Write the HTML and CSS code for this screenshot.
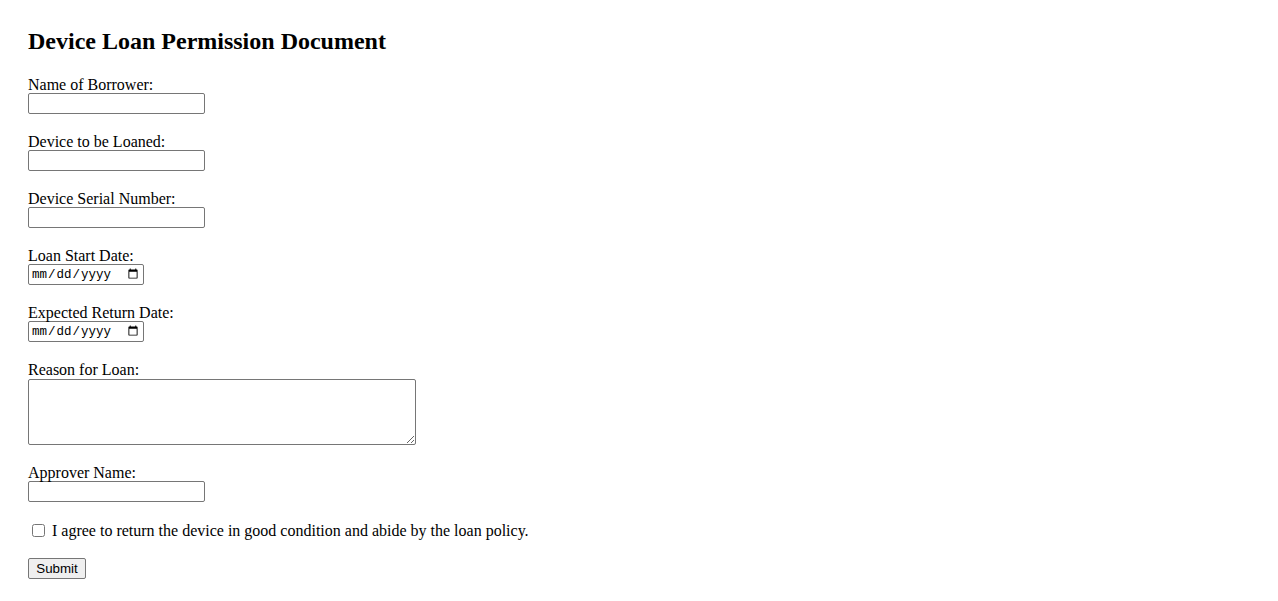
FILE: index.html
```html
<!DOCTYPE html>
<html lang="en">
<head>
<meta charset="utf-8">
<title>Device Loan Permission Document</title>
<link rel="stylesheet" href="styles.css">
</head>
<body>
<div class="page">
  <h2 class="title">Device Loan Permission Document</h2>
  <form class="loan-form">
    <div class="field">
      <label class="field-label" for="borrower">Name of Borrower:</label>
      <input class="text-input" type="text" id="borrower">
    </div>
    <div class="field">
      <label class="field-label" for="device">Device to be Loaned:</label>
      <input class="text-input" type="text" id="device">
    </div>
    <div class="field">
      <label class="field-label" for="serial">Device Serial Number:</label>
      <input class="text-input" type="text" id="serial">
    </div>
    <div class="field">
      <label class="field-label" for="start">Loan Start Date:</label>
      <input class="date-input" type="date" id="start">
    </div>
    <div class="field">
      <label class="field-label" for="return">Expected Return Date:</label>
      <input class="date-input" type="date" id="return">
    </div>
    <div class="field field-tall">
      <label class="field-label" for="reason">Reason for Loan:</label>
      <textarea class="reason-input" id="reason" rows="4"></textarea>
    </div>
    <div class="field">
      <label class="field-label" for="approver">Approver Name:</label>
      <input class="text-input" type="text" id="approver">
    </div>
    <div class="check-field">
      <input class="check-input" type="checkbox" id="agree">
      <label for="agree">I agree to return the device in good condition and abide by the loan policy.</label>
    </div>
    <div class="actions">
      <button class="submit-btn" type="submit">Submit</button>
    </div>
  </form>
</div>
</body>
</html>
```

FILE: styles.css
```css
html, body {
  margin: 0;
  padding: 0;
  background: #ffffff;
}

body {
  font-family: "Liberation Serif", "Times New Roman", serif;
  font-size: 16px;
  color: #000000;
}

.page {
  padding: 28px 28px 20px 28px;
}

.title {
  font-size: 24px;
  font-weight: bold;
  margin: 0 0 21px 0;
}

.loan-form {
  margin: 0;
}

.field {
  margin-bottom: 19px;
}

.field-tall {
  margin-bottom: 19px;
}

.field-label {
  display: block;
  line-height: 17px;
}

.text-input,
.date-input {
  display: block;
  box-sizing: border-box;
  height: 21px;
  margin: 0;
  padding: 1px 2px;
  border: 1px solid #767676;
  border-radius: 2px;
  background: #ffffff;
  font-family: "Liberation Sans", Arial, sans-serif;
  font-size: 13.33px;
}

.text-input {
  width: 177px;
}

.date-input {
  width: 116px;
  font-family: "Liberation Mono", monospace;
  font-size: 12.5px;
  color: #000000;
}

.reason-input {
  display: block;
  box-sizing: border-box;
  width: 388px;
  height: 66px;
  margin: 1px 0 0 0;
  padding: 2px;
  border: 1px solid #767676;
  border-radius: 2px;
  font-family: "Liberation Mono", monospace;
  font-size: 13.33px;
  resize: both;
}

.check-field {
  display: flex;
  align-items: center;
  gap: 4px;
  line-height: 19px;
  margin-bottom: 18px;
}

.check-input {
  width: 13px;
  height: 13px;
  margin: 3px 3px 3px 4px;
}

.actions {
  margin: 0;
}

.submit-btn {
  display: block;
  box-sizing: border-box;
  width: 58px;
  height: 21px;
  margin: 0;
  padding: 1px 6px;
  border: 1px solid #767676;
  border-radius: 2px;
  background: #efefef;
  color: #000000;
  font-family: "Liberation Sans", Arial, sans-serif;
  font-size: 13.33px;
}
```
